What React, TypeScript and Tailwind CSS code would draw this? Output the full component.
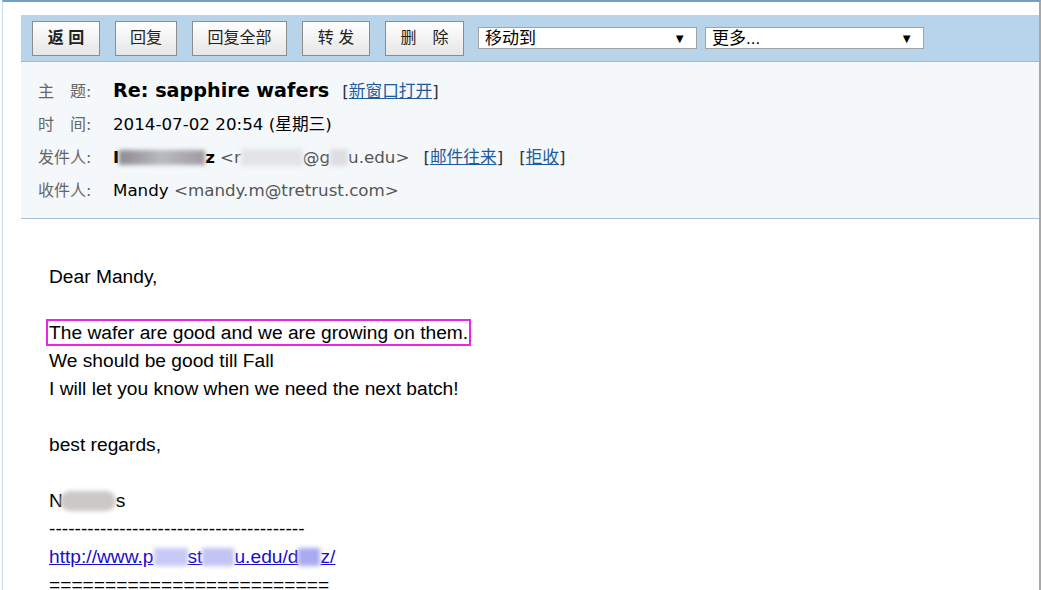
import React from 'react';

const buttons = [
  { label: '返 回', w: 'w-[68px]', bold: true },
  { label: '回复', w: 'w-[62px]' },
  { label: '回复全部', w: 'w-[95px]' },
  { label: '转 发', w: 'w-[68px]' },
  { label: '删　除', w: 'w-[79px]' },
];

const Blur: React.FC<{ className: string }> = ({ className }) => (
  <span className={`inline-block align-middle blur-[2px] ${className}`} />
);

const Select: React.FC<{ label: string }> = ({ label }) => (
  <div className="flex h-[22px] w-[219px] items-center justify-between border border-[#a3a3a3] bg-white pl-[6px] pr-[10px] text-[17px] leading-none text-black">
    <span>{label}</span>
    <span className="text-[13px]">▼</span>
  </div>
);

export default function App() {
  return (
    <div className="h-[590px] w-[1041px] overflow-hidden bg-white font-['Liberation_Sans','Noto_Sans_CJK_SC',sans-serif]">
      <div className="ml-[2px] h-full border-l border-t-2 border-r-2 border-l-[#c6dbee] border-t-[#6f9fcb] border-r-[#a8a8a8] pl-[18px] pt-[13px]">
        {/* toolbar */}
        <div className="flex h-[47px] items-center border-b border-[#9dbad3] bg-[#b8d4ea] pl-[11px]">
          <div className="flex gap-[15px]">
            {buttons.map((b) => (
              <button
                key={b.label}
                className={`h-[35px] ${b.w} border border-[#8c8c8c] bg-gradient-to-b from-white to-[#e6e6e6] text-[16px] text-[#222] ${b.bold ? 'font-bold' : ''}`}
              >
                {b.label}
              </button>
            ))}
          </div>
          <div className="ml-[14px] flex gap-[8px]">
            <Select label="移动到" />
            <Select label="更多..." />
          </div>
        </div>

        {/* header */}
        <div className="h-[157px] border-b border-[#a6c2da] bg-[#f4f8fb] pl-[17px] pt-[13px] font-['DejaVu_Sans','Noto_Sans_CJK_SC',sans-serif] text-[16.7px]">
          <div className="flex h-[33px] items-center">
            <span className="w-[75px] text-[16px] text-[#666]">主　题:</span>
            <span className="text-[19.2px] font-bold text-black">Re: sapphire wafers</span>
            <span className="ml-[13px] text-[#333]">
              [<a className="text-[#1d5b9c] underline">新窗口打开</a>]
            </span>
          </div>
          <div className="flex h-[33px] items-center">
            <span className="w-[75px] text-[16px] text-[#666]">时　间:</span>
            <span className="text-black">2014-07-02 20:54 (星期三)</span>
          </div>
          <div className="flex h-[33px] items-center">
            <span className="w-[75px] text-[16px] text-[#666]">发件人:</span>
            <span className="flex items-center text-black">
              <span className="font-bold">I</span>
              <Blur className="h-[15px] w-[86px] bg-gradient-to-r from-[#8e8a92] via-[#b9b9c0] to-[#a09aa2]" />
              <span className="font-bold">z</span>
              <span className="ml-[5px] text-[#555]">&lt;r</span>
              <Blur className="h-[17px] w-[62px] bg-[#e4e4e8]" />
              <span className="text-[#555]">@g</span>
              <Blur className="h-[17px] w-[18px] bg-[#dedee2]" />
              <span className="text-[#555]">u.edu&gt;</span>
            </span>
            <span className="ml-[14px] text-[#333]">
              [<a className="text-[#1d5b9c] underline">邮件往来</a>]
            </span>
            <span className="ml-[16px] text-[#333]">
              [<a className="text-[#1d5b9c] underline">拒收</a>]
            </span>
          </div>
          <div className="flex h-[33px] items-center">
            <span className="w-[75px] text-[16px] text-[#666]">收件人:</span>
            <span className="text-black">
              Mandy <span className="text-[#555]">&lt;mandy.m@tretrust.com&gt;</span>
            </span>
          </div>
        </div>

        {/* body */}
        <div className="pl-[28px] pt-[44px] text-[19.2px] leading-[28px] text-black">
          <div>Dear Mandy,</div>
          <div className="h-[28px]" />
          <div>
            <span className="-ml-[3px] inline-block border-2 border-[#e628e6] px-[1px] leading-[23px]">
              The wafer are good and we are growing on them.
            </span>
          </div>
          <div>We should be good till Fall</div>
          <div>I will let you know when we need the next batch!</div>
          <div className="h-[28px]" />
          <div>best regards,</div>
          <div className="h-[28px]" />
          <div className="flex items-center">
            <span>N</span>
            <Blur className="-ml-[3px] h-[20px] w-[56px] rounded-full bg-[#cbc8c6]" />
            <span>s</span>
          </div>
          <div>----------------------------------------</div>
          <div className="flex items-center">
            <a className="text-[#1a0dcc] underline">http://www.p</a>
            <Blur className="h-[18px] w-[34px] bg-[#c9c9f7]" />
            <a className="text-[#1a0dcc] underline">st</a>
            <Blur className="h-[18px] w-[32px] bg-[#c3c3f5]" />
            <a className="text-[#1a0dcc] underline">u.edu/d</a>
            <Blur className="h-[18px] w-[22px] bg-[#aaaaf2]" />
            <a className="text-[#1a0dcc] underline">z/</a>
          </div>
          <div>=========================</div>
        </div>
      </div>
    </div>
  );
}
